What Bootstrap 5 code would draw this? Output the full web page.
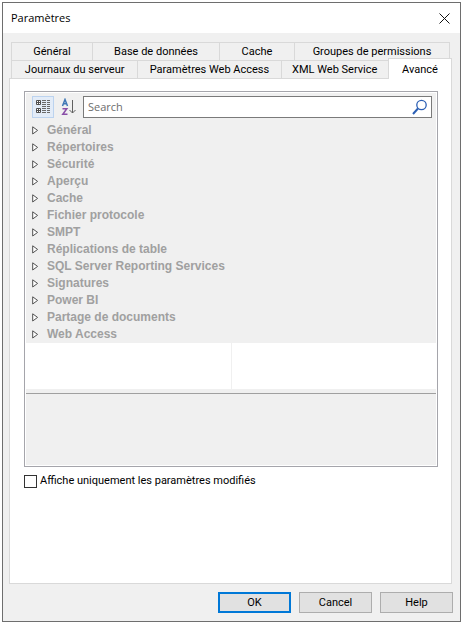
<!DOCTYPE html>
<html lang="fr">
<head>
<meta charset="utf-8">
<meta name="viewport" content="width=device-width, initial-scale=1">
<title>Paramètres</title>
<link href="https://cdn.jsdelivr.net/npm/bootstrap@5.3.0/dist/css/bootstrap.min.css" rel="stylesheet">
<style>
  body { background: #fff; color: #000; font: 11px/16px Roboto, Tahoma, sans-serif; padding: 2px 3px 2px 2px; }
  .dialog { min-height: calc(100vh - 4px); background: #f0f0f0; border: 1px solid #6e6e6e; }
  .titlebar { height: 30px; background: #fff; padding: 0 10px 0 8px; }
  .titlebar h1 { font: 11px/16px "Open Sans", "Noto Sans", sans-serif; }
  .close-btn { line-height: 0; }
  .tabs { margin: 9px 8px 0 6px; }
  .tab-row { display: grid; height: 18px; margin: 0 2px; border-left: 1px solid #d9d9d9; }
  .row-top { grid-template-columns: 81fr 127fr 75fr 155fr; }
  .row-bottom { grid-template-columns: 126fr 143fr 107fr 63fr; margin-right: 0; }
  .tab-btn { background: #f0f0f0; border: solid #d9d9d9; border-width: 1px 1px 0 0; padding: 0; color: #000; white-space: nowrap; line-height: 17px; }
  .tab-btn.active { background: #fff; margin: -2px 0 -1px -1px; border-left-width: 1px; z-index: 1; }
  .pane { margin: 0 8px 0 6px; padding: 12px 13px 12px 14px; background: #fff; border: 1px solid #d9d9d9; }
  .grid-box { border: 1px solid #a5a5ab; padding: 1px; background: #fff; }
  .grid-inner { background: #f0f0f0; }
  .tools { padding: 3px 4px 0 6px; height: 29px; }
  .tool { width: 22px; height: 22px; padding: 0; border: 1px solid transparent; background: transparent; line-height: 0; }
  .tool.active { background: #e3ecf8; border-color: #bcd3ef; }
  .search { height: 22px; margin-left: 3px; border: 1px solid #7a7a7a; background: #fff; }
  .search input { border: 0; outline: 0; padding: 0 4px; min-width: 0; background: transparent; font: 11px/16px "Open Sans", "Noto Sans", sans-serif; }
  .search input::placeholder { color: #6d6d6d; opacity: 1; }
  .search button { padding: 0 3px; border: 0; background: transparent; line-height: 0; }
  .tree-row { height: 17px; gap: 8px; padding: 0 0 0 6px; border: 0; background: transparent; color: #a0a0a0; font: bold 12px/17px "Liberation Sans", Arial, sans-serif; }
  .tree-row svg { margin-bottom: 1px; }
  .cells { height: 46px; background: #fff; }
  .cells div + div { border-left: 1px solid #f0f0f0; }
  .help-box { height: 72px; margin-top: 4px; border-top: 1px solid #a0a0a0; }
  .only-mod { margin-top: 6px; gap: 3px; }
  .only-mod .form-check-input { width: 13px; height: 13px; margin: 0; border: 1px solid #333; border-radius: 0; }
  .actions { gap: 8px; padding: 8px 7px 8px; }
  .cmd { width: 73px; height: 21px; padding: 0; border: 1px solid #adadad; background: #e1e1e1; color: #000; line-height: 19px; }
  .cmd.main { border: 2px solid #0078d7; line-height: 17px; }
</style>
<script src="https://cdn.jsdelivr.net/npm/bootstrap@5.3.0/dist/js/bootstrap.bundle.min.js"></script>
</head>
<body>
<svg class="d-none" aria-hidden="true">
  <symbol id="tri" viewBox="0 0 7 9"><path d="M.7 .8V8L5.600 4.400Z" fill="#fff" stroke="#505050"/></symbol>
</svg>
<main class="dialog d-flex flex-column">
  <header class="titlebar d-flex align-items-center justify-content-between">
    <h1 class="m-0">Paramètres</h1>
    <button class="close-btn border-0 bg-transparent p-0" type="button" aria-label="Fermer">
      <svg width="11" height="11" viewBox="0 0 11 11"><path d="M.5.5l10 10M10.5.5l-10 10" stroke="#111" fill="none"/></svg>
    </button>
  </header>
  <div class="tabs" role="tablist">
    <div class="tab-row row-top">
      <button class="tab-btn" role="tab" type="button">Général</button>
      <button class="tab-btn" role="tab" type="button">Base de données</button>
      <button class="tab-btn" role="tab" type="button">Cache</button>
      <button class="tab-btn" role="tab" type="button">Groupes de permissions</button>
    </div>
    <div class="tab-row row-bottom">
      <button class="tab-btn" role="tab" type="button">Journaux du serveur</button>
      <button class="tab-btn" role="tab" type="button">Paramètres Web Access</button>
      <button class="tab-btn" role="tab" type="button">XML Web Service</button>
      <button class="tab-btn active" role="tab" type="button" aria-selected="true">Avancé</button>
    </div>
  </div>
  <section class="pane flex-grow-1" role="tabpanel">
    <div class="grid-box">
      <div class="grid-inner">
        <div class="tools d-flex">
          <button class="tool active" type="button" aria-label="Par catégorie">
            <svg width="20" height="20" viewBox="0 0 20 20" fill="none" stroke="#505050"><path d="M3.500 3.500h4v4h-4zM3.500 11.500h4v4h-4z" fill="#fff"/><path d="M4 5.500h3M5.500 4v3M4 13.500h3M5.500 12v3"/><path d="M9 3.500h4M14 3.500h3M9 5.500h4M14 5.500h3M9 7.500h4M14 7.500h3M9 9.500h4M14 9.500h3M9 11.500h4M14 11.500h3M9 13.500h4M14 13.500h3M9 15.500h4M14 15.500h3" stroke="#6a6a6a"/></svg>
          </button>
          <button class="tool ms-1" type="button" aria-label="Alphabétique">
            <svg width="16" height="18" viewBox="0 0 16 18" fill="none"><path d="M1.500 8L4 1.500 6.500 8M2.300 5.800h3.400" stroke="#3f78b5" stroke-width="1.500"/><path d="M1.500 10.700h4.300L1.800 16.200h4.700" stroke="#8a4fa8" stroke-width="1.500"/><path d="M11.500 2v13M8.500 12l3 3 3-3" stroke="#606060"/></svg>
          </button>
          <div class="search d-flex flex-grow-1 align-items-center">
            <input class="flex-grow-1" type="text" placeholder="Search" aria-label="Search">
            <button type="button" aria-label="Rechercher">
              <svg width="16" height="16" viewBox="0 0 16 16" fill="none" stroke="#2b5fb4"><circle cx="9.500" cy="6" r="4.700" stroke-width="1.300"/><path d="M6 9.500L1 15" stroke-width="2"/></svg>
            </button>
          </div>
        </div>
        <div class="d-flex flex-column">
          <button class="tree-row d-flex align-items-center" type="button"><svg width="7" height="9"><use href="#tri"/></svg>Général</button>
          <button class="tree-row d-flex align-items-center" type="button"><svg width="7" height="9"><use href="#tri"/></svg>Répertoires</button>
          <button class="tree-row d-flex align-items-center" type="button"><svg width="7" height="9"><use href="#tri"/></svg>Sécurité</button>
          <button class="tree-row d-flex align-items-center" type="button"><svg width="7" height="9"><use href="#tri"/></svg>Aperçu</button>
          <button class="tree-row d-flex align-items-center" type="button"><svg width="7" height="9"><use href="#tri"/></svg>Cache</button>
          <button class="tree-row d-flex align-items-center" type="button"><svg width="7" height="9"><use href="#tri"/></svg>Fichier protocole</button>
          <button class="tree-row d-flex align-items-center" type="button"><svg width="7" height="9"><use href="#tri"/></svg>SMPT</button>
          <button class="tree-row d-flex align-items-center" type="button"><svg width="7" height="9"><use href="#tri"/></svg>Réplications de table</button>
          <button class="tree-row d-flex align-items-center" type="button"><svg width="7" height="9"><use href="#tri"/></svg>SQL Server Reporting Services</button>
          <button class="tree-row d-flex align-items-center" type="button"><svg width="7" height="9"><use href="#tri"/></svg>Signatures</button>
          <button class="tree-row d-flex align-items-center" type="button"><svg width="7" height="9"><use href="#tri"/></svg>Power BI</button>
          <button class="tree-row d-flex align-items-center" type="button"><svg width="7" height="9"><use href="#tri"/></svg>Partage de documents</button>
          <button class="tree-row d-flex align-items-center" type="button"><svg width="7" height="9"><use href="#tri"/></svg>Web Access</button>
        </div>
        <div class="cells d-flex"><div class="w-50"></div><div class="w-50"></div></div>
        <div class="help-box"></div>
      </div>
    </div>
    <div class="only-mod d-flex align-items-center">
      <input class="form-check-input" type="checkbox" id="onlyModified">
      <label for="onlyModified">Affiche uniquement les paramètres modifiés</label>
    </div>
  </section>
  <footer class="actions d-flex justify-content-end">
    <button class="cmd main" type="button">OK</button>
    <button class="cmd" type="button">Cancel</button>
    <button class="cmd" type="button">Help</button>
  </footer>
</main>
</body>
</html>
